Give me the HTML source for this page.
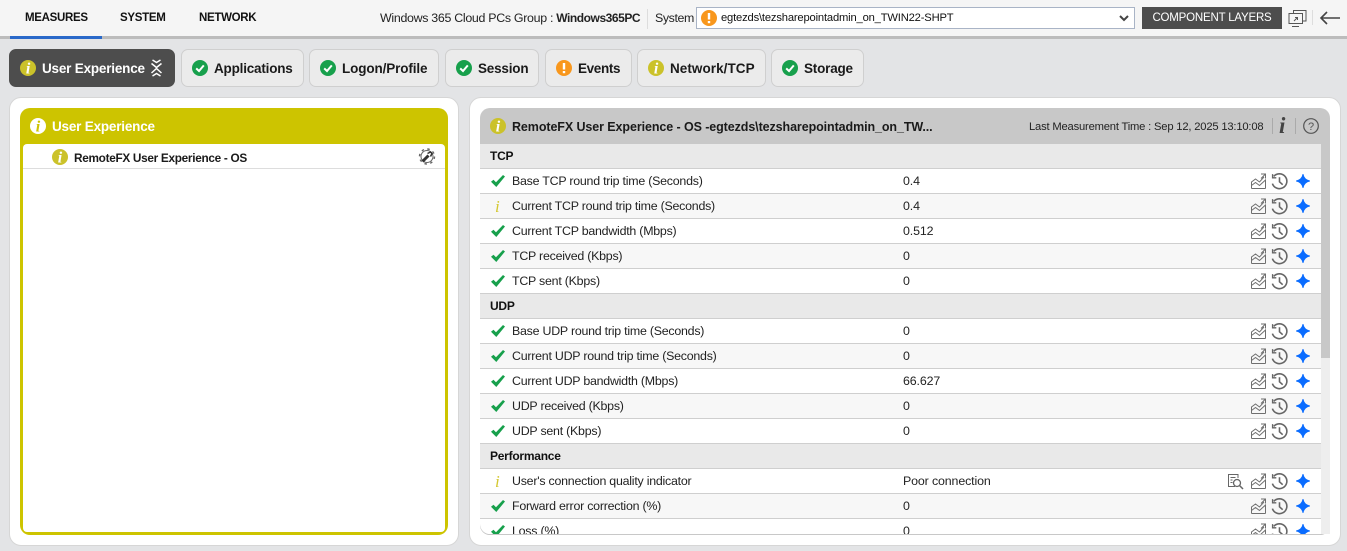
<!DOCTYPE html>
<html><head><meta charset="utf-8">
<style>
*{box-sizing:border-box}
html,body{margin:0;padding:0;width:1347px;height:551px;overflow:hidden;background:#e3e4e6;font-family:"Liberation Sans",Arial,sans-serif;color:#222}
.a{position:absolute;white-space:nowrap}
#top{left:0;top:0;width:1347px;height:39px;background:#f5f5f5;border-bottom:3px solid #bcbcbc}
.nav{top:12px;font-size:11.5px;font-weight:bold;color:#111;letter-spacing:-.3px}
.tab{top:49px;height:38px;background:#ebebeb;border:1px solid #cfcfcf;border-radius:7px;font-size:13.5px;font-weight:bold;color:#1a1a1a;line-height:38px;letter-spacing:-.2px}
.tab svg{position:absolute;left:10px;top:10px}
.tab span{position:absolute;top:0}
.panel{top:97px;height:449px;background:#fff;border:1px solid #d6d6d6;border-radius:12px}
.row{position:absolute;left:480px;width:841px;height:25px;border-bottom:1px solid #cfcfcf;font-size:12.4px;line-height:24px;color:#222;white-space:nowrap;background:#fff;overflow:hidden}
.row.alt{background:#f7f7f7}
.row.sec{background:#e9e9e9;font-weight:bold;color:#111;font-size:12px;letter-spacing:-.25px}
.row.sec b{position:absolute;left:10px}
.row span{position:absolute;left:32px;letter-spacing:-.235px}
.row span.y{left:15px;font:italic 17px 'Liberation Serif';line-height:25px;color:#d4c832;letter-spacing:0}
.row i{position:absolute;left:423px;font-style:normal;letter-spacing:-.13px}
.row svg{position:absolute}
</style></head><body>
<svg width="0" height="0" style="position:absolute">
<defs>
<symbol id="ok" viewBox="0 0 16 16"><circle cx="8" cy="8" r="8" fill="#17a04c"/><path d="M4.200 8.400L7 11l4.800-5.600" fill="none" stroke="#fff" stroke-width="2"/></symbol>
<symbol id="inf" viewBox="0 0 16 16"><circle cx="8" cy="8" r="8" fill="#cbc22a"/><text x="8" y="13.500" font-family="Liberation Serif" font-style="italic" font-weight="bold" font-size="16" text-anchor="middle" fill="#fff">i</text></symbol>
<symbol id="warn" viewBox="0 0 16 16"><circle cx="8" cy="8" r="8" fill="#f8971d"/><rect x="6.800" y="3" width="2.400" height="6.500" fill="#fff"/><rect x="6.800" y="11" width="2.400" height="2.200" fill="#fff"/></symbol>
<symbol id="ck" viewBox="0 0 14 12"><path d="M0 6.800L2.500 4.800L5 7.300L12 0L14 1.500L5.300 12Z" fill="#17a04c"/></symbol>
<symbol id="chart" viewBox="0 0 15 16"><path d="M.5 15.500h14M.5 15.500V9l4-3 4 3 4.500-5M.5 12.500l4-3 4 3 6-5.500V15.500M10 1h4.500v4.500M14.500 1L10 5.500" fill="none" stroke="#6f6f6f" stroke-width="1"/></symbol>
<symbol id="hist" viewBox="0 0 16 16"><path d="M2.600 3.200A7 7 0 1 1 1.300 10" fill="none" stroke="#666" stroke-width="1.500"/><path d="M1.500 1v3.500H5" fill="none" stroke="#666" stroke-width="1.300"/><path d="M8 4v4.300l3 2.700" fill="none" stroke="#666" stroke-width="1.500"/></symbol>
<symbol id="star" viewBox="0 0 14 14"><path d="M7 0Q8 5.800 14 7Q8 8.200 7 14Q6 8.200 0 7Q6 5.800 7 0Z" fill="#0a6cff" stroke="#0a6cff" stroke-width=".8"/></symbol>
</defs>
</svg>

<div class="a" id="top"></div>
<div class="a nav" style="left:25px">MEASURES</div>
<div class="a nav" style="left:120px">SYSTEM</div>
<div class="a nav" style="left:199px">NETWORK</div>
<div class="a" style="left:10px;top:36px;width:92px;height:3px;background:#2a69c9"></div>
<div class="a" style="left:380px;top:11px;font-size:12.4px;color:#222;letter-spacing:-.3px">Windows 365 Cloud PCs Group : <b style="font-size:12px;letter-spacing:-.45px">Windows365PC</b></div>
<div class="a" style="left:647px;top:9px;width:1px;height:20px;background:#ddd"></div>
<div class="a" style="left:655px;top:11px;font-size:12.4px;color:#222;letter-spacing:-.4px">System</div>
<div class="a" style="left:696px;top:7px;width:439px;height:22px;background:#fff;border:1px solid #a9b4c6"></div>
<svg class="a" style="left:701px;top:10px" width="16" height="16"><use href="#warn"/></svg>
<div class="a" style="left:721px;top:12px;font-size:11.2px;color:#111;letter-spacing:-.17px">egtezds\tezsharepointadmin_on_TWIN22-SHPT</div>
<svg class="a" style="left:1119px;top:15px" width="10" height="7"><path d="M1 1l4 4 4-4" fill="none" stroke="#444" stroke-width="2"/></svg>
<div class="a" style="left:1142px;top:7px;width:140px;height:22px;background:#4d4d4d;color:#fff;font-size:11.5px;line-height:23px;text-align:center;letter-spacing:-.2px">COMPONENT LAYERS</div>
<svg class="a" style="left:1288px;top:9px" width="19" height="18" fill="none" stroke="#555"><path d="M5.500 4V1.500h12.500V12H15"/><rect x="1" y="4.500" width="13.500" height="10"/><path d="M4 17.500h7M6 12l3.500-3.500M7 8.500h2.500V11"/></svg>
<div class="a" style="left:1312px;top:10px;width:1px;height:15px;background:#ddd"></div>
<svg class="a" style="left:1319px;top:10px" width="22" height="16" fill="none" stroke="#444" stroke-width="1.600"><path d="M1.500 8H21M8 2L2 8l6 6"/></svg>

<div class="a tab" style="left:9px;width:166px;background:#4d4d4d;border-color:#4d4d4d;color:#fff"><svg width="16" height="16"><use href="#inf"/></svg><span style="left:32px">User Experience</span>
<svg style="left:140px;top:9px" width="13" height="18" fill="none" stroke="#fff" stroke-width="1.500"><path d="M2.500 1l4 2.500 4-2.500M1.500 4.500l5 4 5-4M1.500 14l5-4.500 5 4.500M2.500 17l4-2.500 4 2.500"/></svg></div>
<div class="a tab" style="left:181px;width:123px"><svg width="16" height="16"><use href="#ok"/></svg><span style="left:32px">Applications</span></div>
<div class="a tab" style="left:309px;width:130px"><svg width="16" height="16"><use href="#ok"/></svg><span style="left:32px;letter-spacing:-.12px">Logon/Profile</span></div>
<div class="a tab" style="left:445px;width:94px"><svg width="16" height="16"><use href="#ok"/></svg><span style="left:32px">Session</span></div>
<div class="a tab" style="left:545px;width:87px"><svg width="16" height="16"><use href="#warn"/></svg><span style="left:32px;letter-spacing:-.35px">Events</span></div>
<div class="a tab" style="left:637px;width:129px"><svg width="16" height="16"><use href="#inf"/></svg><span style="left:32px;letter-spacing:.06px">Network/TCP</span></div>
<div class="a tab" style="left:771px;width:93px"><svg width="16" height="16"><use href="#ok"/></svg><span style="left:32px">Storage</span></div>

<div class="a panel" style="left:9px;width:450px"></div>
<div class="a panel" style="left:469px;width:872px"></div>

<div class="a" style="left:20px;top:108px;width:428px;height:427px;background:#cdc400;border-radius:10px"></div>
<div class="a" style="left:23px;top:144px;width:422px;height:388px;background:#fff;border-radius:4px"></div>
<svg class="a" style="left:30px;top:118px" width="16" height="16"><circle cx="8" cy="8" r="8" fill="#fff"/><text x="8" y="13.500" font-family="Liberation Serif" font-style="italic" font-weight="bold" font-size="16" text-anchor="middle" fill="#cdc400">i</text></svg>
<div class="a" style="left:52px;top:119px;font-size:13.5px;font-weight:bold;color:#fff;letter-spacing:-.2px">User Experience</div>
<svg class="a" style="left:52px;top:149px" width="16" height="16"><use href="#inf"/></svg>
<div class="a" style="left:74px;top:151px;font-size:11.8px;font-weight:bold;color:#1a1a1a;letter-spacing:-.3px">RemoteFX User Experience - OS</div>
<div class="a" style="left:23px;top:168px;width:422px;height:1px;background:#ddd"></div>
<svg class="a" style="left:418px;top:148px" width="18" height="17" viewBox="0 0 18 17" fill="none" stroke="#666"><circle cx="9" cy="8.500" r="6" stroke-width="1"/><circle cx="9" cy="8.500" r="7.500" stroke-width="1.400" stroke-dasharray="2.500 3.400"/><path d="M4.500 13.500L10.500 7.500" stroke="#333" stroke-width="3"/><path d="M9.500 5.500l3-1.500 1.500 1.500-1.500 3" stroke="#333" stroke-width="1.500"/></svg>

<div class="a" style="left:480px;top:108px;width:850px;height:427px;background:#c8c8c8;border-radius:10px"></div>
<svg class="a" style="left:490px;top:118px" width="16" height="16"><use href="#inf"/></svg>
<div class="a" style="left:512px;top:120px;font-size:12.5px;font-weight:bold;color:#1a1a1a;letter-spacing:-.09px">RemoteFX User Experience - OS -egtezds\tezsharepointadmin_on_TW...</div>
<div class="a" style="left:1029px;top:121px;font-size:11.2px;color:#222;letter-spacing:-.18px">Last Measurement Time : Sep 12, 2025 13:10:08</div>
<div class="a" style="left:1272px;top:118px;width:1px;height:16px;background:#aaa"></div>
<div class="a" style="left:1295px;top:118px;width:1px;height:16px;background:#aaa"></div>
<div class="a" style="left:1279px;top:113px;font-family:'Liberation Serif',serif;font-style:italic;font-weight:bold;font-size:23px;color:#444">i</div>
<svg class="a" style="left:1303px;top:118px" width="16" height="16"><circle cx="8" cy="8" r="7.300" fill="none" stroke="#555" stroke-width="1.200"/><text x="8" y="12" font-size="11" text-anchor="middle" fill="#555" font-family="Liberation Sans">?</text></svg>

<div class="a" style="left:480px;top:144px;width:850px;height:391px;background:#fff;overflow:hidden;border-radius:0 0 10px 10px;border:1px solid #c8c8c8;border-top:0"></div>
<div class="a" style="left:1321px;top:144px;width:9px;height:214px;background:#c8c8c8"></div>
<div class="a" style="left:1321px;top:358px;width:9px;height:176px;background:#eeeeee"></div>

<div class="a" style="left:480px;top:144px;width:841px;height:390px;overflow:hidden;border-radius:0 0 0 10px">
<div style="position:relative;left:-480px;top:-144px;width:1321px;height:534px">
<div class="row sec" style="top:144px"><b>TCP</b></div>
<div class="row" style="top:169px"><svg style="left:11px;top:6px" width="14" height="12"><use href="#ck"/></svg><span>Base TCP round trip time (Seconds)</span><i>0.4</i><svg style="left:771px;top:4px" width="15" height="16"><use href="#chart"/></svg><svg style="left:791px;top:4px" width="17" height="17"><use href="#hist"/></svg><svg style="left:816px;top:5px" width="14" height="14"><use href="#star"/></svg></div>
<div class="row alt" style="top:194px"><span class="y">i</span><span>Current TCP round trip time (Seconds)</span><i>0.4</i><svg style="left:771px;top:4px" width="15" height="16"><use href="#chart"/></svg><svg style="left:791px;top:4px" width="17" height="17"><use href="#hist"/></svg><svg style="left:816px;top:5px" width="14" height="14"><use href="#star"/></svg></div>
<div class="row" style="top:219px"><svg style="left:11px;top:6px" width="14" height="12"><use href="#ck"/></svg><span>Current TCP bandwidth (Mbps)</span><i>0.512</i><svg style="left:771px;top:4px" width="15" height="16"><use href="#chart"/></svg><svg style="left:791px;top:4px" width="17" height="17"><use href="#hist"/></svg><svg style="left:816px;top:5px" width="14" height="14"><use href="#star"/></svg></div>
<div class="row alt" style="top:244px"><svg style="left:11px;top:6px" width="14" height="12"><use href="#ck"/></svg><span>TCP received (Kbps)</span><i>0</i><svg style="left:771px;top:4px" width="15" height="16"><use href="#chart"/></svg><svg style="left:791px;top:4px" width="17" height="17"><use href="#hist"/></svg><svg style="left:816px;top:5px" width="14" height="14"><use href="#star"/></svg></div>
<div class="row" style="top:269px"><svg style="left:11px;top:6px" width="14" height="12"><use href="#ck"/></svg><span>TCP sent (Kbps)</span><i>0</i><svg style="left:771px;top:4px" width="15" height="16"><use href="#chart"/></svg><svg style="left:791px;top:4px" width="17" height="17"><use href="#hist"/></svg><svg style="left:816px;top:5px" width="14" height="14"><use href="#star"/></svg></div>
<div class="row sec" style="top:294px"><b>UDP</b></div>
<div class="row" style="top:319px"><svg style="left:11px;top:6px" width="14" height="12"><use href="#ck"/></svg><span>Base UDP round trip time (Seconds)</span><i>0</i><svg style="left:771px;top:4px" width="15" height="16"><use href="#chart"/></svg><svg style="left:791px;top:4px" width="17" height="17"><use href="#hist"/></svg><svg style="left:816px;top:5px" width="14" height="14"><use href="#star"/></svg></div>
<div class="row alt" style="top:344px"><svg style="left:11px;top:6px" width="14" height="12"><use href="#ck"/></svg><span>Current UDP round trip time (Seconds)</span><i>0</i><svg style="left:771px;top:4px" width="15" height="16"><use href="#chart"/></svg><svg style="left:791px;top:4px" width="17" height="17"><use href="#hist"/></svg><svg style="left:816px;top:5px" width="14" height="14"><use href="#star"/></svg></div>
<div class="row" style="top:369px"><svg style="left:11px;top:6px" width="14" height="12"><use href="#ck"/></svg><span>Current UDP bandwidth (Mbps)</span><i>66.627</i><svg style="left:771px;top:4px" width="15" height="16"><use href="#chart"/></svg><svg style="left:791px;top:4px" width="17" height="17"><use href="#hist"/></svg><svg style="left:816px;top:5px" width="14" height="14"><use href="#star"/></svg></div>
<div class="row alt" style="top:394px"><svg style="left:11px;top:6px" width="14" height="12"><use href="#ck"/></svg><span>UDP received (Kbps)</span><i>0</i><svg style="left:771px;top:4px" width="15" height="16"><use href="#chart"/></svg><svg style="left:791px;top:4px" width="17" height="17"><use href="#hist"/></svg><svg style="left:816px;top:5px" width="14" height="14"><use href="#star"/></svg></div>
<div class="row" style="top:419px"><svg style="left:11px;top:6px" width="14" height="12"><use href="#ck"/></svg><span>UDP sent (Kbps)</span><i>0</i><svg style="left:771px;top:4px" width="15" height="16"><use href="#chart"/></svg><svg style="left:791px;top:4px" width="17" height="17"><use href="#hist"/></svg><svg style="left:816px;top:5px" width="14" height="14"><use href="#star"/></svg></div>
<div class="row sec" style="top:444px"><b>Performance</b></div>
<div class="row" style="top:469px"><span class="y">i</span><span>User's connection quality indicator</span><i>Poor connection</i><svg style="left:747px;top:4px" width="17" height="17" viewBox="0 0 17 17" fill="none" stroke="#666"><path d="M8 13.500H1.500V1.500H11V5"/><path d="M3.500 4.500h5M3.500 7h2M3.500 9.500h2"/><circle cx="10" cy="10" r="3.500" stroke-width="1.300"/><path d="M12.500 12.500L16 16" stroke-width="1.500"/></svg><svg style="left:771px;top:4px" width="15" height="16"><use href="#chart"/></svg><svg style="left:791px;top:4px" width="17" height="17"><use href="#hist"/></svg><svg style="left:816px;top:5px" width="14" height="14"><use href="#star"/></svg></div>
<div class="row alt" style="top:494px"><svg style="left:11px;top:6px" width="14" height="12"><use href="#ck"/></svg><span>Forward error correction (%)</span><i>0</i><svg style="left:771px;top:4px" width="15" height="16"><use href="#chart"/></svg><svg style="left:791px;top:4px" width="17" height="17"><use href="#hist"/></svg><svg style="left:816px;top:5px" width="14" height="14"><use href="#star"/></svg></div>
<div class="row" style="top:519px;height:15px;border-bottom:0"><svg style="left:11px;top:6px" width="14" height="12"><use href="#ck"/></svg><span>Loss (%)</span><i>0</i><svg style="left:771px;top:4px" width="15" height="16"><use href="#chart"/></svg><svg style="left:791px;top:4px" width="17" height="17"><use href="#hist"/></svg><svg style="left:816px;top:5px" width="14" height="14"><use href="#star"/></svg></div>
</div>
</div>
</body></html>
